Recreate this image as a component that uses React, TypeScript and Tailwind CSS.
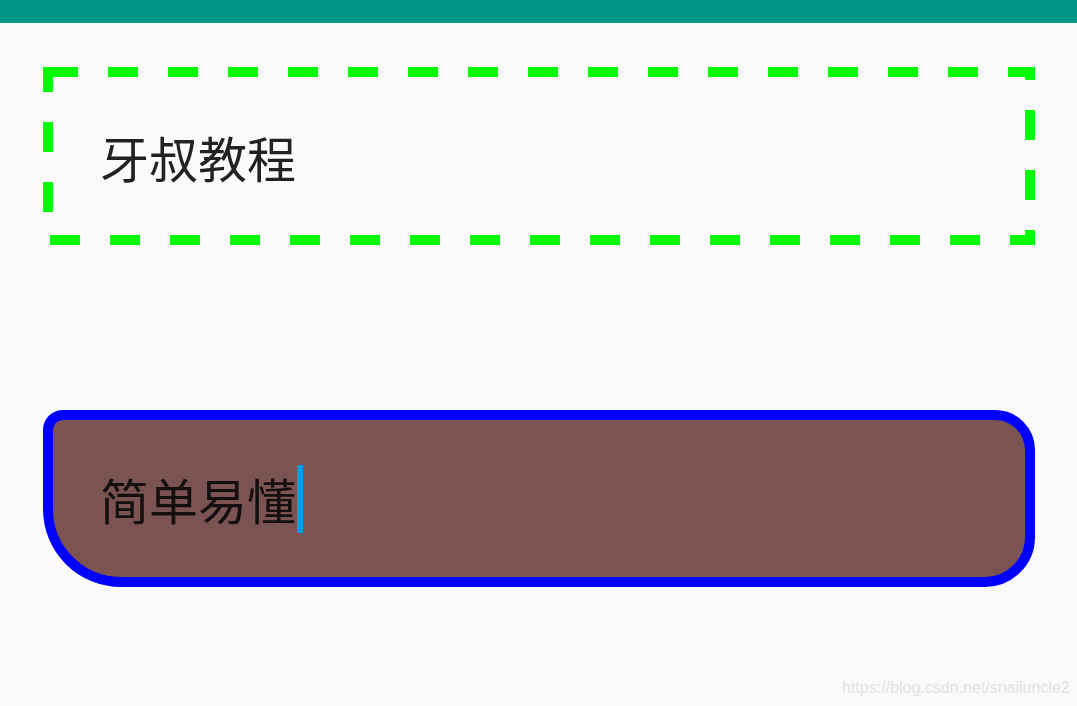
import React from "react";

export default function App() {
  return (
    <div
      className="w-[1077px] h-[706px] bg-[#fafafa] flex flex-col overflow-hidden relative"
      style={{ fontFamily: '"Noto Sans CJK SC", "Noto Sans", sans-serif' }}
    >
      <div className="h-[23px] bg-[#009688] shrink-0" />

      <div className="relative ml-[43px] mt-[44px] w-[992px] h-[178px] flex items-center pl-[57px]">
        <svg className="absolute inset-0" width="992" height="178" viewBox="0 0 992 178">
          <rect
            x="5"
            y="5"
            width="982"
            height="168"
            fill="none"
            stroke="#00ff00"
            strokeWidth="10"
            strokeDasharray="30 30"
            strokeLinejoin="miter"
          />
        </svg>
        <span className="relative text-[49px] leading-none text-[#222222]">牙叔教程</span>
      </div>

      <div className="ml-[43px] mt-[165px] w-[992px] h-[177px] border-[10px] border-[#0000ff] bg-[#7b5353] rounded-tl-[20px] rounded-tr-[40px] rounded-br-[50px] rounded-bl-[78px] flex items-center pl-[47px]">
        <span className="text-[49px] leading-none text-[#141010]">简单易懂</span>
        <span className="inline-block w-[6px] h-[68px] bg-[#039be5] ml-[1px]" />
      </div>

      <div
        className="absolute left-[842px] top-[676px] text-[16px] text-[#e3e3e3]"
        style={{ fontFamily: '"Liberation Sans", Arial, sans-serif' }}
      >
        https://blog.csdn.net/snailuncle2
      </div>
    </div>
  );
}
